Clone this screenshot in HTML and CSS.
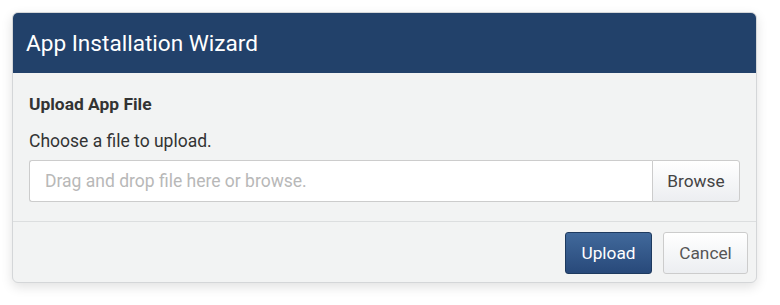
FILE: index.html
```html
<!DOCTYPE html>
<html lang="en">
<head>
    <meta charset="UTF-8">
    <meta name="viewport" content="width=device-width, initial-scale=1.0">
    <title>App Installation Wizard</title>
    <link rel="stylesheet" href="styles.css">
</head>
<body>

    <div class="modal">
        <div class="modal-header">
            <h1>App Installation Wizard</h1>
        </div>
        <div class="modal-body">
            <h2>Upload App File</h2>
            <p>Choose a file to upload.</p>
            <div class="file-group">
                <input class="file-input" type="text" placeholder="Drag and drop file here or browse.">
                <button class="btn btn-browse">Browse</button>
            </div>
        </div>
        <div class="modal-footer">
            <button class="btn btn-primary">Upload</button>
            <button class="btn btn-default">Cancel</button>
        </div>
    </div>

</body>
</html>
```

FILE: styles.css
```css
body {
    font-family: Roboto, "Liberation Sans", Arial, sans-serif;
    margin: 0;
    padding: 12px 23px 22px 12px;
    background-color: #ffffff;
}
.modal {
    background-color: #f2f3f3;
    border: 1px solid #d4d6d8;
    border-radius: 6px;
    box-shadow: 0 4px 12px rgba(0, 0, 0, 0.12);
    overflow: hidden;
}
.modal-header {
    background-color: #22416a;
    height: 60px;
    padding: 0 13px;
    display: flex;
    align-items: center;
}
.modal-header h1 {
    margin: 0;
    font-size: 22.6px;
    font-weight: 400;
    color: #ffffff;
}
.modal-body {
    padding: 21px 16px 19px 16px;
    border-bottom: 1px solid #dcdedf;
}
.modal-body h2 {
    margin: 0 0 17px 0;
    font-size: 17.4px;
    font-weight: 700;
    color: #333333;
    line-height: 20px;
}
.modal-body p {
    margin: 0 0 9px 0;
    font-size: 17.5px;
    color: #333333;
    line-height: 20px;
}
.file-group {
    display: flex;
    height: 42px;
}
.file-input {
    flex: 1;
    margin: 0;
    border: 1px solid #cccccc;
    border-right: none;
    border-radius: 3px 0 0 3px;
    background-color: #ffffff;
    padding: 0 15px;
    font-family: inherit;
    font-size: 17.5px;
    color: #333333;
    outline: none;
}
.file-input::placeholder {
    color: #b8b8b8;
}
.btn {
    font-family: inherit;
    font-size: 17.3px;
    margin: 0;
    cursor: pointer;
}
.btn-browse {
    width: 88px;
    border: 1px solid #cccccc;
    border-radius: 0 3px 3px 0;
    background: linear-gradient(#ffffff, #eceef1);
    color: #444444;
}
.modal-footer {
    display: flex;
    justify-content: flex-end;
    gap: 11px;
    padding: 10px 8px 8px 16px;
}
.btn-primary {
    width: 87px;
    height: 42px;
    border: 1px solid #1e3a5f;
    border-radius: 3px;
    background: linear-gradient(#41699b, #28497a);
    color: #ffffff;
}
.btn-default {
    width: 85px;
    height: 42px;
    border: 1px solid #cccccc;
    border-radius: 3px;
    background: linear-gradient(#ffffff, #eceef1);
    color: #555555;
}
```
